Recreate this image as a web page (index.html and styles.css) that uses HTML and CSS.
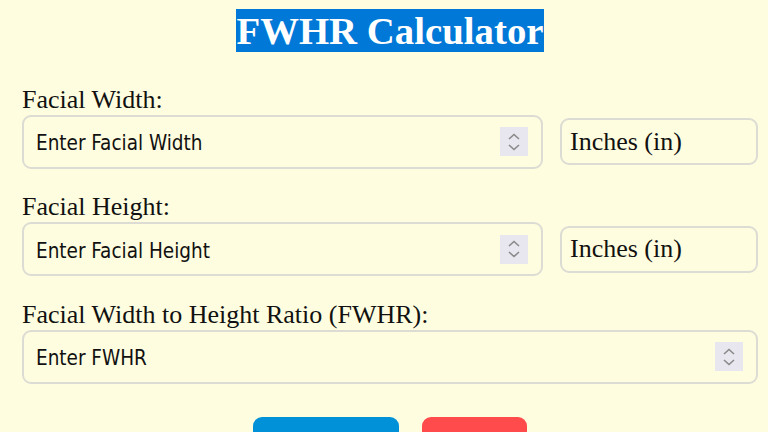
FILE: index.html
```html
<!DOCTYPE html>
<html>
<head>
<meta charset="utf-8">
<link rel="stylesheet" href="styles.css">
</head>
<body>
<div class="calc">
  <h1 class="title"><span class="sel">FWHR Calculator</span></h1>

  <div class="group">
    <label class="label">Facial Width:</label>
    <div class="row">
      <div class="field">
        <input class="inp" type="text" placeholder="Enter Facial Width">
        <span class="spin"><svg width="16" height="22" viewBox="0 0 16 22"><path d="M3 8 L8 3.5 L13 8" fill="none" stroke="#8a8a8a" stroke-width="1.6"/><path d="M3 14 L8 18.5 L13 14" fill="none" stroke="#8a8a8a" stroke-width="1.6"/></svg></span>
      </div>
      <div class="unit">Inches (in)</div>
    </div>
  </div>

  <div class="group">
    <label class="label">Facial Height:</label>
    <div class="row">
      <div class="field">
        <input class="inp" type="text" placeholder="Enter Facial Height">
        <span class="spin"><svg width="16" height="22" viewBox="0 0 16 22"><path d="M3 8 L8 3.5 L13 8" fill="none" stroke="#8a8a8a" stroke-width="1.6"/><path d="M3 14 L8 18.5 L13 14" fill="none" stroke="#8a8a8a" stroke-width="1.6"/></svg></span>
      </div>
      <div class="unit">Inches (in)</div>
    </div>
  </div>

  <div class="group">
    <label class="label">Facial Width to Height Ratio (FWHR):</label>
    <div class="row">
      <div class="field wide">
        <input class="inp" type="text" placeholder="Enter FWHR">
        <span class="spin"><svg width="16" height="22" viewBox="0 0 16 22"><path d="M3 8 L8 3.5 L13 8" fill="none" stroke="#8a8a8a" stroke-width="1.6"/><path d="M3 14 L8 18.5 L13 14" fill="none" stroke="#8a8a8a" stroke-width="1.6"/></svg></span>
      </div>
    </div>
  </div>

  <div class="buttons">
    <button class="btn calcbtn">Calculate</button>
    <button class="btn clearbtn">Clear</button>
  </div>
</div>
</body>
</html>
```
FILE: styles.css
```css
html, body {
  margin: 0;
  padding: 0;
  background: #fffddf;
  overflow: hidden;
}
.calc {
  width: 736px;
  margin-left: 22px;
  font-family: "Liberation Serif", "Times New Roman", serif;
  color: #111;
}
.title {
  margin: 10px 0 0 0;
  text-align: center;
  font-size: 38.8px;
  font-weight: bold;
  line-height: 42px;
}
.sel {
  background: #0078d7;
  color: #fff;
}
.group {
  margin-top: 33.5px;
}
.group + .group {
  margin-top: 24.5px;
}
.label {
  display: block;
  font-size: 26px;
  line-height: 28px;
}
.row {
  display: flex;
  align-items: center;
  gap: 17px;
  margin-top: 1px;
}
.field {
  width: 521px;
  height: 54px;
  box-sizing: border-box;
  border: 2px solid #dcdcd4;
  border-radius: 9px;
  display: flex;
  align-items: center;
  padding: 0 13px 0 12px;
}
.field.wide {
  width: 736px;
}
.inp {
  flex: 1;
  border: none;
  outline: none;
  background: transparent;
  font-family: "DejaVu Sans Condensed", "DejaVu Sans", Verdana, sans-serif;
  font-stretch: condensed;
  font-size: 20.5px;
  padding: 3px 0 0 0;
  color: #111;
}
.inp::placeholder {
  color: #111;
  opacity: 1;
}
.spin {
  width: 28px;
  height: 29px;
  background: #e8e6ee;
  display: flex;
  align-items: center;
  justify-content: center;
}
.unit {
  width: 198px;
  height: 47px;
  box-sizing: border-box;
  border: 2px solid #dcdcd4;
  border-radius: 9px;
  font-size: 26px;
  display: flex;
  align-items: center;
  padding-left: 8px;
}
.buttons {
  display: flex;
  justify-content: center;
  gap: 23px;
  margin-top: 33px;
}
.btn {
  border: none;
  border-radius: 9px;
  height: 60px;
  padding-top: 24px;
  color: #fff;
  font-family: "Liberation Serif", serif;
  font-size: 22px;
}
.calcbtn {
  width: 146px;
  background: #0091d8;
}
.clearbtn {
  width: 105px;
  background: #ff4b4b;
}
```
